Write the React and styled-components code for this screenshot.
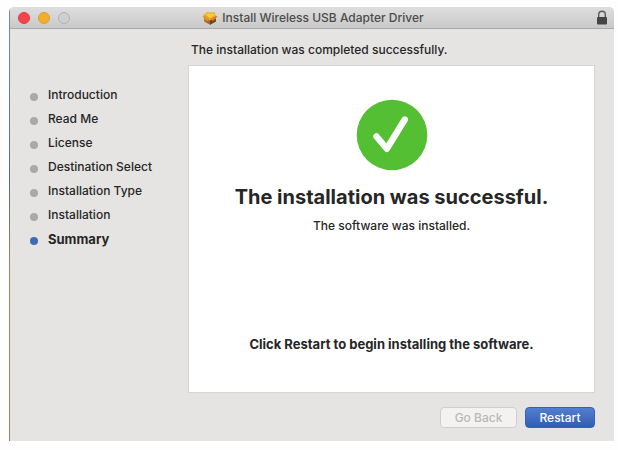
import React from "react";
import styled, { createGlobalStyle } from "styled-components";

const steps = [
  "Introduction",
  "Read Me",
  "License",
  "Destination Select",
  "Installation Type",
  "Installation",
  "Summary"
];

const PackageIcon = () => (
  <svg width="16" height="16" viewBox="0 0 16 16" aria-hidden="true">
    <path d="M2.2 7.5 8 10.5l5.8-3v4L8 14.8l-5.8-3.3z" fill="#a9652a" />
    <path d="M8 10.5l5.8-3v4L8 14.8z" fill="#6d4422" />
    <path d="M2.6 4 6 1.8l2 1L12.6 2l1 3.4L15.5 6.6 11 10.4l-3-1-3 1.2L.6 6.6z" fill="#f3a922" />
    <path d="M3.8 4.6 6.2 3l2 1 3.6-.8.8 2.6L8 8z" fill="#fccb3d" />
    <path d="M.6 6.6 3 6 8 9.2l-3 2z" fill="#e0962a" />
    <path d="M8 9.2 13.4 6l2.1.6L11 10.8z" fill="#d8822a" />
  </svg>
);

const LockIcon = () => (
  <svg width="12" height="16" viewBox="0 0 12 16" aria-hidden="true">
    <path d="M2.7 8V4.6a3.3 3.3 0 0 1 6.6 0V8" fill="none" stroke="#5b5b5b" strokeWidth="1.4" />
    <rect x="1" y="7" width="10" height="7.5" rx="1" fill="#444" />
  </svg>
);

const SuccessIcon = () => (
  <svg width="72" height="72" viewBox="0 0 72 72" aria-hidden="true">
    <circle cx="36" cy="36" r="35.3" fill="#54bf33" />
    <path
      d="M20.5 37.5 30.8 49.8 48.8 20.5"
      fill="none"
      stroke="#fff"
      strokeWidth="6.4"
      strokeLinecap="round"
      strokeLinejoin="round"
    />
  </svg>
);

const App = () => (
  <>
    <GlobalStyle />
    <Page>
      <Window>
        <TitleBar>
          <Lights>
            <Light type="button" aria-label="Close" $color="#f4454b" $edge="#dd3f43" />
            <Light type="button" aria-label="Minimize" $color="#f0ae2c" $edge="#dc9f2a" />
            <Light type="button" aria-label="Zoom" disabled $color="#cfcfcf" $edge="#b2b2b2" />
          </Lights>
          <Title>
            <PackageIcon />
            Install Wireless USB Adapter Driver
          </Title>
          <Lock>
            <LockIcon />
          </Lock>
        </TitleBar>
        <Body>
          <Steps>
            {steps.map(step => (
              <Step key={step} $active={step === "Summary"}>
                {step}
              </Step>
            ))}
          </Steps>
          <Main>
            <Status>The installation was completed successfully.</Status>
            <Panel>
              <SuccessIcon />
              <Heading>The installation was successful.</Heading>
              <Text>The software was installed.</Text>
              <Notice>Click Restart to begin installing the software.</Notice>
            </Panel>
            <Actions>
              <Button type="button" disabled>
                Go Back
              </Button>
              <PrimaryButton type="button">Restart</PrimaryButton>
            </Actions>
          </Main>
        </Body>
      </Window>
    </Page>
  </>
);

const GlobalStyle = createGlobalStyle`
  * {
    box-sizing: border-box;
  }
  body {
    margin: 0;
    background: #fefefe;
    color: #262626;
    font-family: Inter, "Liberation Sans", sans-serif;
    font-size: 12px;
    font-weight: 500;
    line-height: 16px;
  }
`;

const Page = styled.div`
  display: flex;
  min-height: 100vh;
  padding: 7px 4px 9px 9px;
`;

const Window = styled.div`
  flex: 1;
  display: flex;
  flex-direction: column;
  overflow: hidden;
  padding-left: 1px;
  background: linear-gradient(#6f8fa8, #5f6b78 40%, #8f8a5c 60%, #8b8765) left / 1px 100% no-repeat #e5e4e2;
  border-radius: 5px 5px 0 0;
`;

const TitleBar = styled.header`
  display: grid;
  grid-template-columns: 1fr auto 1fr;
  align-items: center;
  height: 22px;
  padding: 0 6px 0 8px;
  background: linear-gradient(#dedede, #c9c9c9);
  border-bottom: 1px solid #a9a9a9;
`;

const Lights = styled.div`
  display: flex;
  gap: 8px;
`;

const Light = styled.button`
  width: 12px;
  height: 12px;
  padding: 0;
  border: 1px solid ${props => props.$edge};
  border-radius: 50%;
  background: ${props => props.$color};
`;

const Title = styled.div`
  display: flex;
  align-items: center;
  gap: 4px;
  color: #4c4c4c;
`;

const Lock = styled.div`
  display: flex;
  justify-content: flex-end;
`;

const Body = styled.div`
  flex: 1;
  display: flex;
`;

const Steps = styled.ol`
  flex: 0 0 178px;
  margin: 0;
  padding: 54px 0 0 20px;
  list-style: none;
`;

const Step = styled.li`
  display: flex;
  align-items: center;
  gap: 10px;
  height: 24px;
  font-size: ${props => (props.$active ? "13px" : "12px")};
  font-weight: ${props => (props.$active ? 700 : 500)};

  &::before {
    content: "";
    width: 8px;
    height: 8px;
    margin-top: 4px;
    border-radius: 50%;
    background: ${props => (props.$active ? "#3c6bb8" : "#aaa9a8")};
  }
`;

const Main = styled.main`
  flex: 1;
  display: flex;
  flex-direction: column;
  padding: 13px 19px 13px 0;
`;

const Status = styled.p`
  margin: 0 0 7px;
  padding-left: 3px;
`;

const Panel = styled.section`
  flex: 1;
  display: flex;
  flex-direction: column;
  align-items: center;
  padding: 33px 16px 40px;
  background: #fff;
  border: 1px solid #d6d5d3;
  text-align: center;
`;

const Heading = styled.h1`
  margin: 12px 0 0;
  font-size: 20px;
  line-height: 28px;
  font-weight: 700;
`;

const Text = styled.p`
  margin: 7px 0 0;
`;

const Notice = styled.p`
  margin: auto 0 0;
  font-size: 13px;
  font-weight: 700;
`;

const Actions = styled.div`
  display: flex;
  justify-content: flex-end;
  gap: 8px;
  margin-top: 14px;
`;

const Button = styled.button`
  height: 21px;
  min-width: 77px;
  padding: 0 12px;
  border: 1px solid #cfcecc;
  border-radius: 4px;
  background: #f3f2f1;
  color: #b9b8b7;
  font: inherit;
  line-height: 16px;
`;

const PrimaryButton = styled(Button)`
  min-width: 70px;
  border-color: #3560b5;
  background: linear-gradient(#527fd0, #315cb6);
  color: #fff;
`;

export default App;
